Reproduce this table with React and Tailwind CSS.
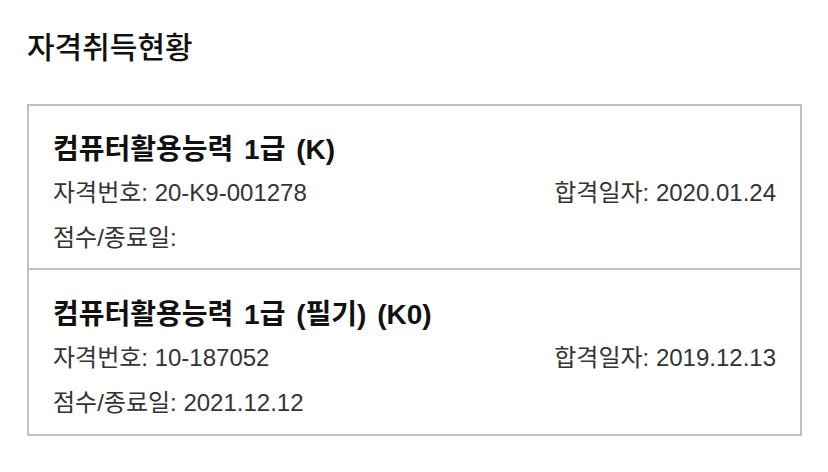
import React from 'react';

const certs = [
    { name: '컴퓨터활용능력 1급 (K)', no: '20-K9-001278', passed: '2020.01.24', score: '' },
    { name: '컴퓨터활용능력 1급 (필기) (K0)', no: '10-187052', passed: '2019.12.13', score: '2021.12.12' },
];

const App = () => {
    return (
        <div
            className="w-[828px] h-[472px] bg-white px-[27px] pt-[26px]"
            style={{ fontFamily: '"Liberation Sans", "Noto Sans CJK KR", sans-serif' }}
        >
            <h1 className="text-[30px] leading-[44px] font-medium text-[#111]">자격취득현황</h1>

            <div className="mt-[34px] w-[775px] border-2 border-[#c0c0c0]">
                {certs.map((c, i) => (
                    <div
                        key={c.no}
                        className={i > 0 ? 'px-6 pt-[27px] pb-[11px] border-t-2 border-[#c0c0c0]' : 'px-6 pt-[26px] pb-[10px]'}
                    >
                        <h2 className="text-[28px] leading-[36px] font-bold text-[#111] [word-spacing:3px]">{c.name}</h2>
                        <div className="flex justify-between text-[24px] leading-[50px] text-[#333]">
                            <span>자격번호: {c.no}</span>
                            <span>합격일자: {c.passed}</span>
                        </div>
                        <div className="text-[24px] leading-[40px] text-[#333]">
                            점수/종료일:{c.score ? ` ${c.score}` : ''}
                        </div>
                    </div>
                ))}
            </div>
        </div>
    );
};

export default App;
